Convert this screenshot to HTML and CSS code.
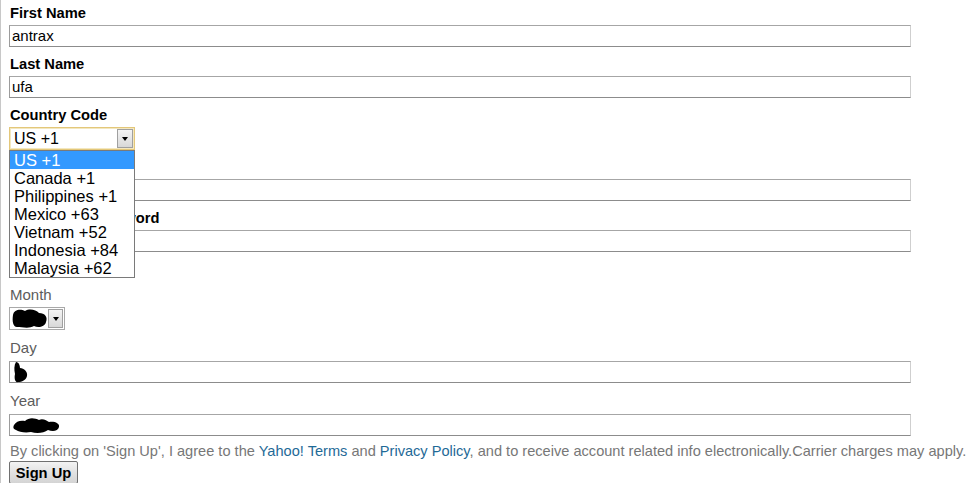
FILE: index.html
```html
<!DOCTYPE html>
<html>
<head>
<meta charset="utf-8">
<link rel="stylesheet" href="styles.css">
</head>
<body>
<div class="page">
  <form class="form">
    <div class="field">
      <label class="label">First Name</label>
      <div class="input">antrax</div>
    </div>
    <div class="field">
      <label class="label">Last Name</label>
      <div class="input">ufa</div>
    </div>
    <div class="field">
      <label class="label">Country Code</label>
      <div class="select-wrap">
        <div class="select focused">
          <span class="select-value">US +1</span>
          <span class="select-btn"><span class="tri"></span></span>
        </div>
        <ul class="listbox">
          <li class="opt selected">US +1</li>
          <li class="opt">Canada +1</li>
          <li class="opt">Philippines +1</li>
          <li class="opt">Mexico +63</li>
          <li class="opt">Vietnam +52</li>
          <li class="opt">Indonesia +84</li>
          <li class="opt">Malaysia +62</li>
        </ul>
      </div>
    </div>
    <div class="field">
      <label class="label">Password</label>
      <div class="input"></div>
    </div>
    <div class="field">
      <label class="label">Verify your Password</label>
      <div class="input"></div>
    </div>
    <div class="group">
      <label class="label">Birthday</label>
      <div class="sub month">
        <label class="sublabel">Month</label>
        <div class="select small">
          <span class="select-value">
            <svg class="blob" width="36" height="21" viewBox="0 0 36 21"><path d="M1 7 C2 1 9 1 13 3 C18 0 24 2 27 5 C33 5 36 9 34 14 C33 19 26 20 22 18 C17 21 10 19 5 19 C1 19 0 13 1 7 Z" fill="#000"/></svg>
          </span>
          <span class="select-btn"><span class="tri"></span></span>
        </div>
      </div>
      <div class="sub">
        <label class="sublabel">Day</label>
        <div class="input">
          <svg class="blob" width="16" height="21" viewBox="0 0 16 21"><path d="M3 0 C6 0 7 4 7 6 C11 6 15 10 14 14 C13 18 9 20 5 20 C2 21 1 16 2 12 C1 8 1 3 3 0 Z" fill="#000"/></svg>
        </div>
      </div>
      <div class="sub">
        <label class="sublabel">Year</label>
        <div class="input">
          <svg class="blob" width="48" height="17" viewBox="0 0 48 17"><path d="M1 8 C3 4 8 3 12 4 C16 0 22 1 26 3 C30 1 34 4 36 5 C41 4 47 6 46 10 C45 14 40 15 35 13 C31 16 24 17 18 15 C12 16 6 15 3 13 C0 12 0 10 1 8 Z" fill="#000"/></svg>
        </div>
      </div>
    </div>
    <p class="terms">By clicking on 'Sign Up', I agree to the <a class="link">Yahoo! Terms</a> and <a class="link">Privacy Policy</a>, and to receive account related info electronically.Carrier charges may apply.</p>
    <div class="actions"><button type="button" class="button">Sign Up</button></div>
  </form>
</div>
</body>
</html>
```
FILE: styles.css
```css
* { box-sizing: border-box; }
html, body { margin: 0; padding: 0; background: #fff; }
body { font-family: "Liberation Sans", Arial, sans-serif; color: #000; overflow: hidden; }
.page {
  border-left: 1px solid #c8c8c8;
  padding: 4px 0 0 8px;
  height: 483px;
}
.form { display: flex; flex-direction: column; gap: 8px; width: 902px; }
.field { display: flex; flex-direction: column; gap: 3px; }
.label { font-size: 14.7px; font-weight: bold; line-height: 18px; padding-left: 1px; color: #000; white-space: nowrap; }
.input {
  height: 22px;
  border: 1px solid;
  border-color: #a6a6a6 #cfcfcf #8c8c8c #9c9c9c;
  background: #fff;
  font-size: 15px;
  line-height: 20px;
  padding-left: 2px;
  display: flex;
  align-items: center;
}
.select-wrap { position: relative; width: 126px; height: 23px; }
.select {
  display: flex;
  align-items: center;
  height: 23px;
  width: 126px;
  border: 1px solid #a9a9a9;
  background: #fff;
  font-size: 16px;
  padding: 1px;
}
.select.focused { border-color: #e3c77a; box-shadow: inset 0 0 0 1px #f3e7bf; }
.select-value { flex: 1; padding-left: 3px; line-height: 19px; display: flex; align-items: center; }
.select-btn {
  width: 16px;
  height: 19px;
  border: 1px solid #a0a0a0;
  background: linear-gradient(#f4f4f4, #d8d8d8);
  display: flex;
  align-items: center;
  justify-content: center;
}
.tri {
  width: 0; height: 0;
  border-left: 3.5px solid transparent;
  border-right: 3.5px solid transparent;
  border-top: 4px solid #000;
}
.listbox {
  position: absolute;
  left: 0;
  top: 23px;
  width: 126px;
  margin: 0;
  padding: 0;
  list-style: none;
  background: #fff;
  border: 1px solid #7a7a7a;
  z-index: 5;
}
.opt { font-size: 16.5px; line-height: 18px; height: 18px; padding-left: 4px; white-space: nowrap; }
.opt.selected { background: #3399ff; color: #fff; }
.group { display: flex; flex-direction: column; }
.sub { display: flex; flex-direction: column; gap: 4px; margin-top: 9px; }
.sub.month { gap: 3px; margin-top: 8px; }
.sublabel { font-size: 15px; line-height: 18px; color: #5c5c5c; padding-left: 1px; }
.select.small { width: 56px; height: 23px; }
.select.small .select-value { padding-left: 1px; }
.blob { display: block; }
.input .blob { margin-left: 1px; }
.terms { margin: -1px 0 0 0; font-size: 14.6px; line-height: 17px; color: #777; white-space: nowrap; padding-left: 1px; }
.link { color: #1f6a97; text-decoration: none; }
.actions { margin-top: -7px; }
.button {
  font-family: "Liberation Sans", Arial, sans-serif;
  font-size: 14.7px;
  font-weight: bold;
  height: 23px;
  width: 69px;
  padding: 0;
  border: 1px solid #707070;
  border-radius: 2px;
  background: linear-gradient(#f3f3f3, #e2e2e2 50%, #d4d4d4);
  color: #000;
}
```
